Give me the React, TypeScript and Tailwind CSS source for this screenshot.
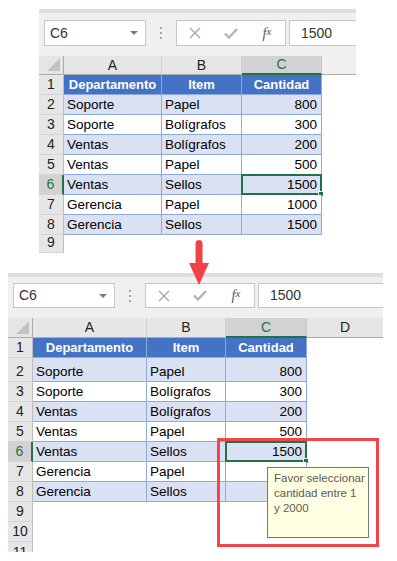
import React from "react";

type Row = [string, string, string];

const data: Row[] = [
  ["Departamento", "Item", "Cantidad"],
  ["Soporte", "Papel", "800"],
  ["Soporte", "Bolígrafos", "300"],
  ["Ventas", "Bolígrafos", "200"],
  ["Ventas", "Papel", "500"],
  ["Ventas", "Sellos", "1500"],
  ["Gerencia", "Papel", "1000"],
  ["Gerencia", "Sellos", "1500"],
];

const Toolbar = ({ compact }: { compact: boolean }) => {
  const boxH = compact ? "h-[25px]" : "h-[26px]";
  return (
    <div className="bg-[#f0f0f0]">
      <div className="h-[4px] bg-[#dedede]" />
      <div className={`flex items-center pl-[5px] pb-[10px] ${compact ? "pt-[6px]" : "pt-[7px]"}`}>
        <div className={`relative w-[102px] ${boxH} bg-white border border-[#c6c6c6] flex items-center pl-[5px] text-[14px] text-[#333]`}>
          C6
          <div className="absolute right-[7px] top-[10px] w-0 h-0 border-l-[4px] border-r-[4px] border-t-[4px] border-l-transparent border-r-transparent border-t-[#7a7a7a]" />
        </div>
        <div className="w-[30px] flex flex-col items-center gap-[3px]">
          <div className="w-[2px] h-[2px] bg-[#a8a8a8]" />
          <div className="w-[2px] h-[2px] bg-[#a8a8a8]" />
          <div className="w-[2px] h-[2px] bg-[#a8a8a8]" />
        </div>
        <div className={`w-[110px] ${boxH} bg-white border border-[#c6c6c6] flex items-center`}>
          <span className="w-[36px] flex justify-center">
            <svg width="12" height="12" viewBox="0 0 12 12">
              <path d="M1 1 L11 11 M11 1 L1 11" stroke="#a8a8a8" strokeWidth="1.4" />
            </svg>
          </span>
          <span className="w-[36px] flex justify-center">
            <svg width="14" height="11" viewBox="0 0 14 11">
              <path d="M1 5.5 L5 9.5 L13 1" stroke="#b4b4b4" strokeWidth="2.4" fill="none" />
            </svg>
          </span>
          <span className="w-[36px] flex justify-center font-['Liberation_Serif',serif] italic text-[14px] text-[#555]">
            f<span className="text-[11px]">x</span>
          </span>
        </div>
        <div className={`ml-[3px] flex-1 ${boxH} bg-white border border-r-0 border-[#c6c6c6] pl-[11px] flex items-center text-[14px] text-[#333]`}>
          1500
        </div>
      </div>
    </div>
  );
};

const Corner = () => (
  <div className="w-[25px] shrink-0 bg-[#e6e6e6] border-r border-b border-[#ababab] relative">
    <svg className="absolute right-[3px] bottom-[3px]" width="13" height="13" viewBox="0 0 13 13">
      <polygon points="13,0 13,13 0,13" fill="#c3c3c3" />
    </svg>
  </div>
);

const RowHead = ({ n, sel, h }: { n: number; sel?: boolean; h: string }) => (
  <div
    className={`w-[25px] shrink-0 ${h} flex items-end justify-center pb-[1px] leading-[17px] text-[14px] overflow-hidden border-b border-b-[#d4d4d4] ${
      sel
        ? "bg-[#d2d2d2] text-[#217346] border-r-2 border-r-[#217346]"
        : "bg-[#e6e6e6] text-[#222] border-r border-r-[#bcbcbc]"
    }`}
  >
    {n}
  </div>
);

const Sheet = ({ bottom }: { bottom: boolean }) => {
  const widths = bottom ? ["w-[114px]", "w-[79px]", "w-[81px]"] : ["w-[98px]", "w-[80px]", "w-[80px]"];
  const letters = ["A", "B", "C"];
  const headH = bottom ? "h-[20px]" : "h-[19px]";
  return (
    <div className="font-['Liberation_Sans',Arial,sans-serif] text-[13.5px] text-black">
      <Toolbar compact={bottom} />
      <div className={`flex ${headH}`}>
        <Corner />
        {letters.map((l, j) => (
          <div
            key={l}
            className={`${widths[j]} shrink-0 flex items-center justify-center text-[14px] ${
              j === 2
                ? "bg-[#d2d2d2] text-[#217346] border-b-2 border-b-[#217346] border-r border-r-[#c6c6c6]"
                : "bg-[#e6e6e6] text-[#222] border-b border-b-[#ababab] border-r border-r-[#d0d0d0]"
            }`}
          >
            {l}
          </div>
        ))}
        {bottom ? (
          <div className="w-[76px] shrink-0 flex items-center justify-center text-[14px] bg-[#e6e6e6] text-[#222] border-b border-b-[#ababab]">
            D
          </div>
        ) : (
          <div className="flex-1 bg-[#f0f0f0] border-b border-b-[#ababab]" />
        )}
      </div>
      {data.map((r, i) => {
        const n = i + 1;
        const hdr = i === 0;
        const band = n % 2 === 0;
        const sel = n === 6;
        const h = bottom && n === 2 ? "h-[24px]" : "h-[20px]";
        return (
          <div key={n} className={`flex ${h}`}>
            <RowHead n={n} sel={sel} h={h} />
            {r.map((c, j) => (
              <div
                key={j}
                className={`${widths[j]} shrink-0 relative flex border-r border-b border-[#8ea9db] whitespace-nowrap ${
                  hdr
                    ? "bg-[#4472c4] text-white font-bold text-[13px] items-center justify-center"
                    : `items-end pb-[1px] leading-[17px] ${band ? "bg-[#d9e1f2]" : "bg-white"} ${
                        j === 2 ? "justify-end pr-[4px]" : "pl-[3px]"
                      }`
                }`}
              >
                {/* under the tooltip in the lower sheet */}
                {bottom && j === 2 && n > 6 ? "" : c}
                {sel && j === 2 && (
                  <div className="absolute inset-[-1px] border-2 border-[#217346]">
                    <div className="absolute right-[-4px] bottom-[-4px] w-[6px] h-[6px] bg-[#217346] border border-white" />
                  </div>
                )}
              </div>
            ))}
            <div className={bottom ? "w-[76px] shrink-0 bg-white" : "flex-1 bg-white"} />
          </div>
        );
      })}
      {bottom ? (
        <>
          <div className="flex h-[20px]">
            <RowHead n={9} h="h-[20px]" />
          </div>
          <div className="flex h-[20px]">
            <RowHead n={10} h="h-[20px]" />
          </div>
          <div className="flex h-[10px] overflow-hidden">
            <div className="w-[25px] shrink-0 h-[20px] flex items-end justify-center pb-[1px] leading-[17px] text-[14px] bg-[#e6e6e6] text-[#222] border-r border-r-[#bcbcbc]">
              11
            </div>
          </div>
        </>
      ) : (
        <div className="flex h-[18px]">
          <RowHead n={9} h="h-[18px]" />
        </div>
      )}
    </div>
  );
};

const App = () => {
  return (
    <div className="relative w-[397px] h-[561px] overflow-hidden bg-white">
      <div className="ml-[39px] mt-[9px] w-[317px]">
        <Sheet bottom={false} />
      </div>
      <div className="ml-[8px] mt-[20px] w-[375px] h-[279px] overflow-hidden">
        <Sheet bottom />
      </div>

      <svg className="absolute left-[189px] top-[239px]" width="20" height="47" viewBox="0 0 20 47">
        <rect x="6.5" y="1" width="7" height="28" rx="3.5" fill="#f04349" />
        <polygon points="0,24 20,24 10,46" fill="#f04349" />
      </svg>

      <div className="absolute left-[217px] top-[438px] w-[162px] h-[109px] border-[3px] border-[#f2464b]" />

      <div className="absolute left-[267px] top-[467px] w-[102px] h-[71px] bg-[#ffffe1] border border-[#767676] px-[6px] pt-[3px] font-['Liberation_Sans',Arial,sans-serif] text-[11.5px] leading-[15px] text-[#5a5a5a] whitespace-nowrap flex flex-col">
        <div className="h-[15px]">Favor seleccionar</div>
        <div className="h-[15px]">cantidad entre 1</div>
        <div className="h-[15px]">y 2000</div>
      </div>
    </div>
  );
};

export default App;
